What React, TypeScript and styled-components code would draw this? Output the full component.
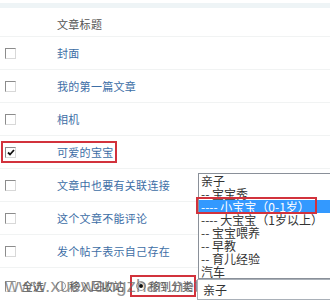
import * as React from "react";
import styled, { createGlobalStyle } from "styled-components";

const GlobalStyle = createGlobalStyle`
  html, body {
    margin: 0;
    padding: 0;
    background: #ffffff;
  }
  body {
    font-family: "Noto Sans CJK SC", "Liberation Sans", sans-serif;
  }
`;

const Page = styled.div`
  position: relative;
  width: 330px;
  height: 306px;
  overflow: hidden;
  background: #ffffff;
`;

const TopBand = styled.div`
  margin-top: 3px;
  height: 5px;
  background: #eef4f6;
`;

const HeaderRow = styled.div`
  display: flex;
  align-items: center;
  box-sizing: border-box;
  height: 29px;
  padding: 3px 0 0 57px;
  border-bottom: 1px solid #f1f3f3;
  font-size: 11px;
  color: #555555;
  letter-spacing: 0.3px;
`;

const Row = styled.div`
  display: flex;
  align-items: center;
  box-sizing: border-box;
  height: 33px;
  border-bottom: 1px solid #f1f3f3;
`;

const RowInner = styled.div<{ $marked?: boolean }>`
  display: flex;
  align-items: center;
  height: 18px;
  margin-left: 3px;
  padding: 0 1px 0 2px;
  outline: ${(p) => (p.$marked ? "2px solid #d2323c" : "none")};
`;

const Box = styled.span`
  display: inline-flex;
  align-items: center;
  justify-content: center;
  box-sizing: border-box;
  width: 11px;
  height: 11px;
  border: 1px solid;
  border-color: #8c8c8c #d8d8d8 #d8d8d8 #8c8c8c;
  background: #ffffff;
`;

const Title = styled.span`
  margin-left: 41px;
  font-size: 11px;
  color: #3d6ea6;
  letter-spacing: 0.3px;
  white-space: nowrap;
`;

const FooterRow = styled.div`
  display: flex;
  align-items: center;
  height: 36px;
  padding-left: 5px;
  font-size: 11px;
  color: #555555;
  white-space: nowrap;
`;

const FooterLabel = styled.span`
  margin-left: 6px;
`;

const RadioLabel = styled.span`
  margin-left: 3px;
`;

const RadioGroup = styled.span<{ $marked?: boolean }>`
  display: inline-flex;
  align-items: center;
  height: 18px;
  margin-left: ${(p) => (p.$marked ? "3px" : "8px")};
  padding: ${(p) => (p.$marked ? "0 1px 0 4px" : "0 5px 0 4px")};
  outline: ${(p) => (p.$marked ? "2px solid #d2323c" : "none")};
`;

const Radio = styled.span<{ $on?: boolean }>`
  display: inline-flex;
  align-items: center;
  justify-content: center;
  box-sizing: border-box;
  width: 10px;
  height: 10px;
  border-radius: 50%;
  border: 1px solid #9a9a9a;
  background: #ffffff;
  &::after {
    content: "";
    width: 4px;
    height: 4px;
    border-radius: 50%;
    background: ${(p) => (p.$on ? "#111111" : "transparent")};
  }
`;

const Watermark = styled.div`
  position: absolute;
  left: 5px;
  top: 276px;
  font-family: "Liberation Sans", sans-serif;
  font-size: 19px;
  line-height: 19px;
  color: rgba(105, 105, 105, 0.72);
  pointer-events: none;
  white-space: nowrap;
`;

const ListBox = styled.div`
  position: absolute;
  left: 198px;
  top: 173px;
  width: 150px;
  border: 1px solid #8a9099;
  background: #ffffff;
  font-size: 12px;
  color: #333333;
`;

const Option = styled.div<{ $selected?: boolean }>`
  position: relative;
  height: 13px;
  line-height: 13px;
  padding-left: 2px;
  white-space: nowrap;
  background: ${(p) => (p.$selected ? "#3399ff" : "transparent")};
  color: ${(p) => (p.$selected ? "#ffffff" : "#333333")};
  ${(p) =>
    p.$selected &&
    `&::after {
      content: "";
      position: absolute;
      left: -3px;
      top: -3px;
      width: 117px;
      height: 13px;
      border: 2px solid #d2323c;
    }`}
`;

const SelectBox = styled.div`
  position: absolute;
  left: 197px;
  top: 279px;
  width: 150px;
  height: 21px;
  box-sizing: border-box;
  border: 1px solid #a9b0b8;
  background: #ffffff;
  padding-left: 5px;
  font-size: 12px;
  line-height: 19px;
  color: #333333;
`;

const Check = () => (
  <svg width="8" height="7" viewBox="0 0 8 7">
    <path d="M1 3.5 L3 5.5 L7 1" stroke="#111" strokeWidth="1.8" fill="none" />
  </svg>
);

const articles = [
  "封面",
  "我的第一篇文章",
  "相机",
  "可爱的宝宝",
  "文章中也要有关联连接",
  "这个文章不能评论",
  "发个帖子表示自己存在",
];

const options = [
  "亲子",
  "-- 宝宝秀",
  "---- 小宝宝（0-1岁）",
  "---- 大宝宝（1岁以上）",
  "-- 宝宝喂养",
  "-- 早教",
  "-- 育儿经验",
  "汽车",
];

export default function App() {
  return (
    <Page>
      <GlobalStyle />
      <TopBand />
      <HeaderRow>文章标题</HeaderRow>
      {articles.map((title, i) => (
        <Row key={title}>
          <RowInner $marked={i === 3}>
            <Box>{i === 3 && <Check />}</Box>
            <Title>{title}</Title>
          </RowInner>
        </Row>
      ))}
      <FooterRow>
        <Box />
        <FooterLabel>全选</FooterLabel>
        <RadioGroup>
          <Radio />
          <RadioLabel>移入回收站</RadioLabel>
        </RadioGroup>
        <RadioGroup $marked>
          <Radio $on />
          <RadioLabel>移到分类</RadioLabel>
        </RadioGroup>
      </FooterRow>
      <Watermark>www.xuewangzhan.net</Watermark>
      <ListBox>
        {options.map((o, i) => (
          <Option key={o} $selected={i === 2}>
            {o}
          </Option>
        ))}
      </ListBox>
      <SelectBox>亲子</SelectBox>
    </Page>
  );
}
